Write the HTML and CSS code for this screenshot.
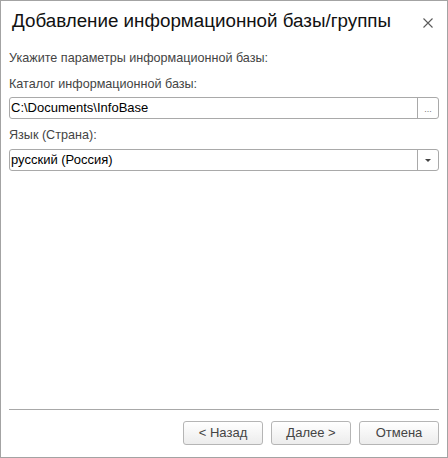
FILE: index.html
```html
<!DOCTYPE html>
<html lang="ru">
<head>
<meta charset="utf-8">
<link rel="stylesheet" href="styles.css">
</head>
<body>
<div class="window">
  <div class="titlebar">
    <div class="title">Добавление информационной базы/группы</div>
    <div class="close" aria-label="Закрыть">
      <svg width="10" height="10" viewBox="0 0 10 10"><path d="M0.5 0.5L9.5 9.5M9.5 0.5L0.5 9.5" stroke="#5a5a5a" stroke-width="1.1" fill="none"/></svg>
    </div>
  </div>
  <div class="content">
    <div class="text intro">Укажите параметры информационной базы:</div>
    <div class="text label">Каталог информационной базы:</div>
    <div class="field">
      <div class="value">C:\Documents\InfoBase</div>
      <div class="fbtn"><span class="dots">...</span></div>
    </div>
    <div class="text label second">Язык (Страна):</div>
    <div class="field">
      <div class="value">русский (Россия)</div>
      <div class="fbtn"><span class="arrow"></span></div>
    </div>
  </div>
  <div class="footer">
    <div class="sep"></div>
    <div class="buttons">
      <div class="btn">&lt; Назад</div>
      <div class="btn">Далее &gt;</div>
      <div class="btn">Отмена</div>
    </div>
  </div>
</div>
</body>
</html>
```
FILE: styles.css
```css
html, body {
  margin: 0;
  padding: 0;
  background: #ffffff;
}
body {
  font-family: "Liberation Sans", Arial, sans-serif;
}
.window {
  box-sizing: border-box;
  width: 448px;
  height: 458px;
  border: 1px solid #a3a3a3;
  background: #ffffff;
  display: flex;
  flex-direction: column;
  padding: 0 8px;
}
.titlebar {
  display: flex;
  align-items: flex-start;
  justify-content: space-between;
  padding-top: 9px;
}
.title {
  font-size: 18.8px;
  line-height: 22px;
  color: #111;
  padding-left: 3px;
}
.close {
  width: 10px;
  height: 10px;
  margin-top: 8px;
  margin-right: 6px;
  display: flex;
}
.content {
  flex: 1;
  display: flex;
  flex-direction: column;
  padding-top: 19px;
}
.text {
  font-size: 12.6px;
  line-height: 15px;
  color: #444;
}
.label {
  margin-top: 11px;
  margin-bottom: 5px;
}
.label.second {
  margin-top: 9px;
  margin-bottom: 6px;
}
.field {
  box-sizing: border-box;
  height: 22px;
  border: 1px solid #a9a9a9;
  border-radius: 3px;
  display: flex;
  background: #fff;
}
.value {
  flex: 1;
  font-size: 13px;
  line-height: 20px;
  color: #000;
  padding-left: 1px;
}
.fbtn {
  width: 20px;
  border-left: 1px solid #a9a9a9;
  display: flex;
  align-items: center;
  justify-content: center;
}
.dots {
  font-size: 9px;
  line-height: 9px;
  color: #777;
  letter-spacing: 0;
  margin-top: 3px;
}
.arrow {
  width: 0;
  height: 0;
  border-left: 3px solid transparent;
  border-right: 3px solid transparent;
  border-top: 3px solid #444;
  margin-top: 0;
}
.footer {
  display: flex;
  flex-direction: column;
  padding-bottom: 12px;
}
.sep {
  height: 1px;
  background: #a8a8a8;
}
.buttons {
  display: flex;
  justify-content: flex-end;
  gap: 8px;
  margin-top: 11px;
}
.btn {
  box-sizing: border-box;
  width: 80px;
  height: 24px;
  border: 1px solid #b5b5b5;
  border-radius: 3px;
  background: linear-gradient(#ffffff, #ececec);
  font-size: 13px;
  line-height: 22px;
  text-align: center;
  color: #444;
}
```
